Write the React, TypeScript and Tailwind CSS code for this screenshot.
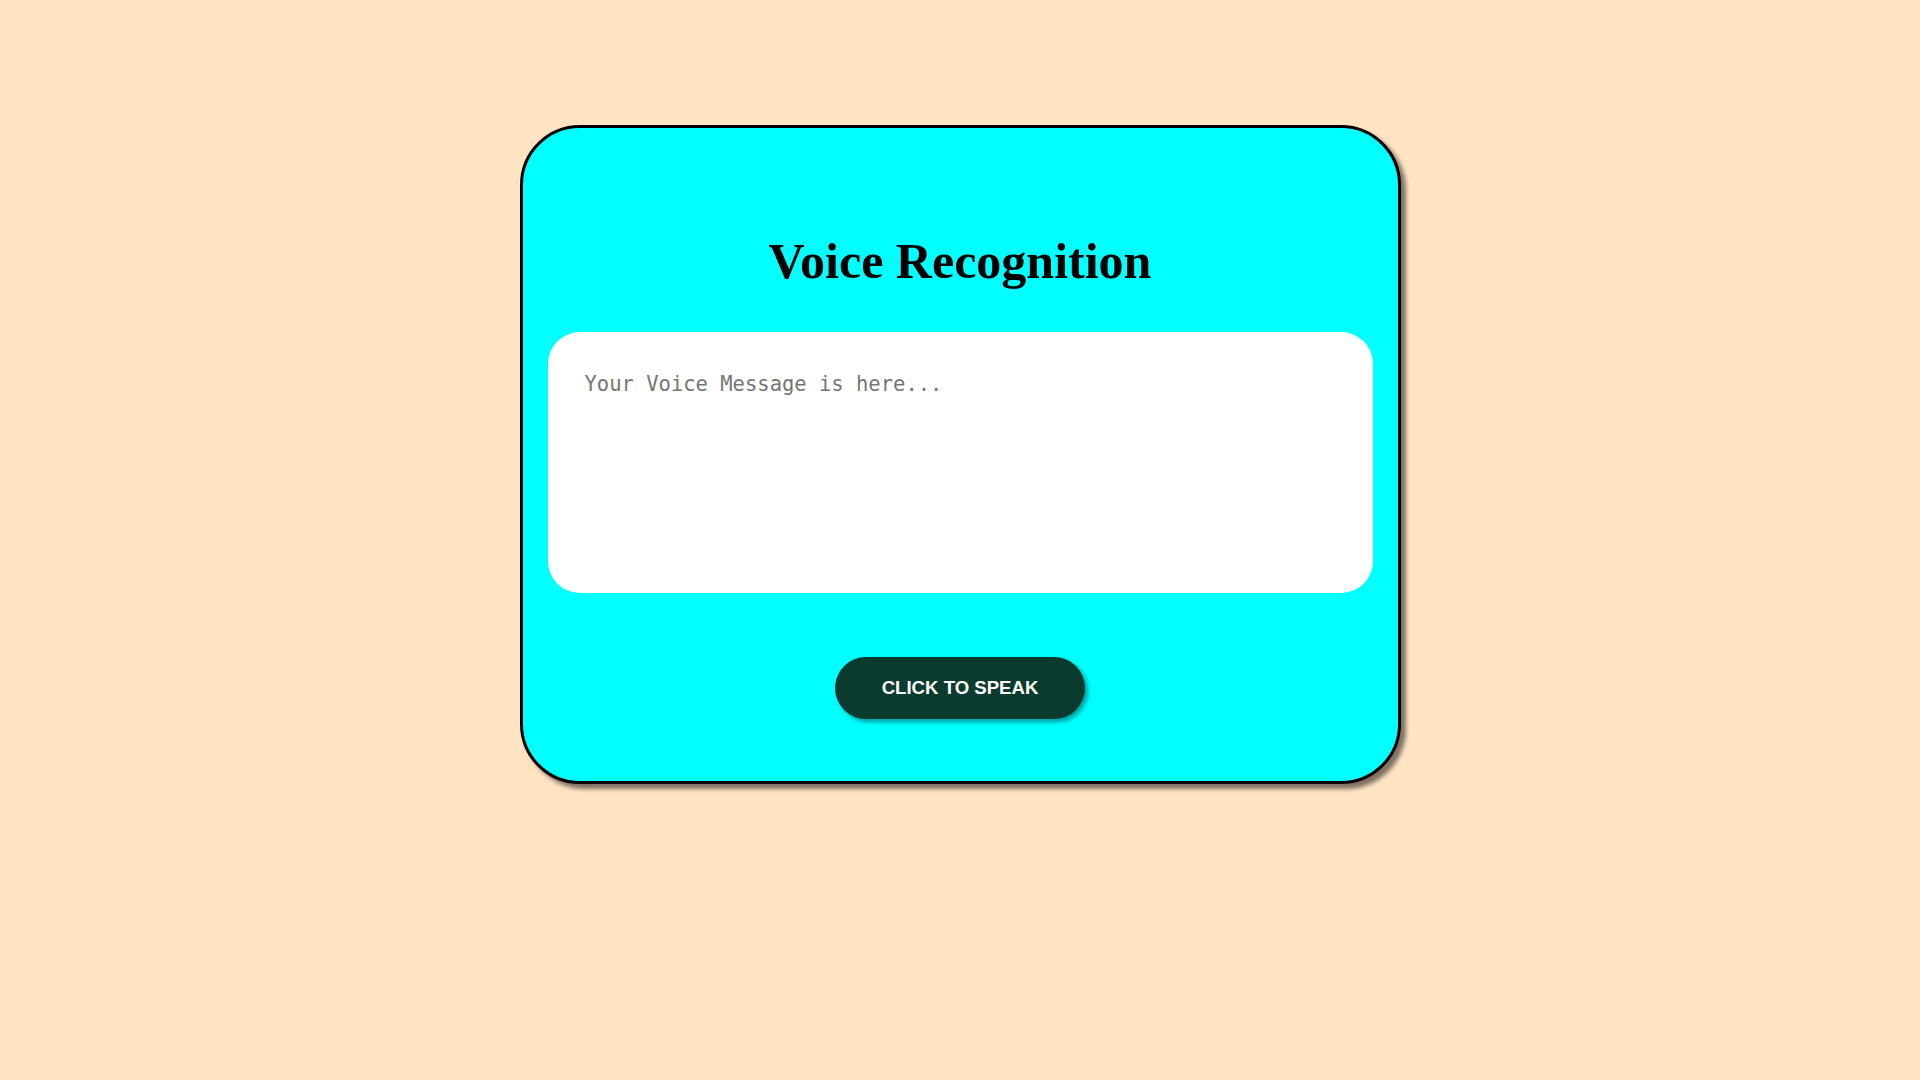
import { useState } from 'react';

const App = () => {
  const [message, setMessage] = useState<string>('');

  return (
    <div className="min-h-screen w-full bg-[#ffe4c4] pt-[125px]">
      <div className="mx-auto flex w-[881px] flex-col items-center rounded-[60px] border-[3px] border-black bg-[#00ffff] px-[25px] pb-[62px] pt-[108px] shadow-[5px_5px_4px_rgba(0,0,0,0.5)]">
        <h1 className="font-['Liberation_Serif',serif] text-[50px] font-bold leading-none text-black">
          Voice Recognition
        </h1>

        <textarea
          value={message}
          onChange={(e) => setMessage(e.target.value)}
          placeholder="Your Voice Message is here..."
          className="mt-[46px] h-[261px] w-full resize-none rounded-[32px] bg-white px-[37px] py-[37px] font-['DejaVu_Sans_Mono',monospace] text-[20.5px] text-black outline-none placeholder:text-[#757575]"
        />

        <button className="mt-[64px] h-[62px] w-[250px] rounded-full bg-[#0b3a2e] font-['Liberation_Sans',Arial,sans-serif] text-[18.6px] font-bold text-white shadow-[3px_3px_4px_#00a0a0]">
          CLICK TO SPEAK
        </button>
      </div>
    </div>
  );
};

export default App;
